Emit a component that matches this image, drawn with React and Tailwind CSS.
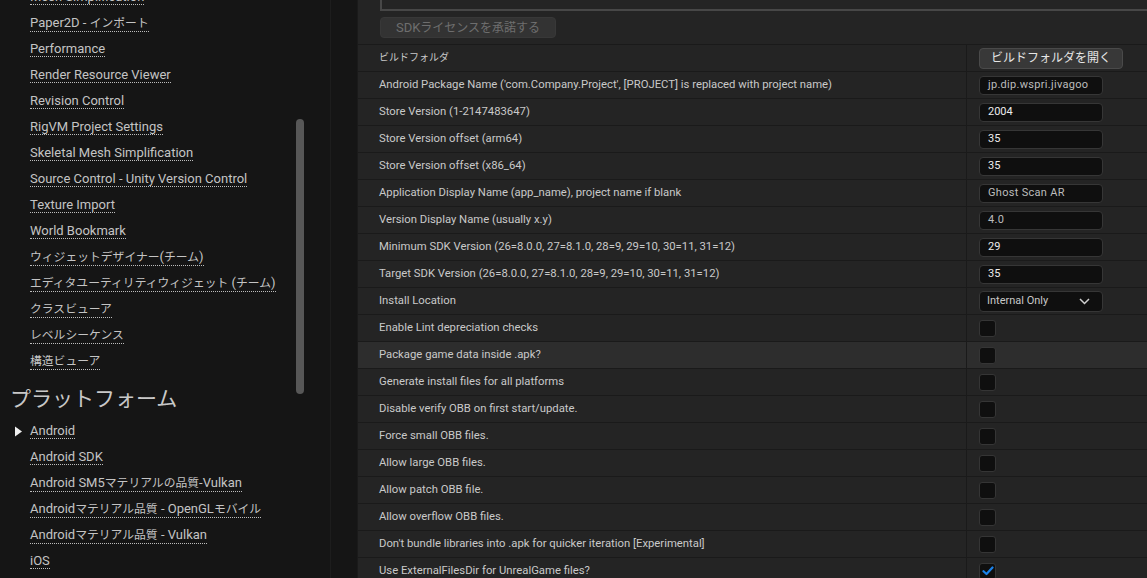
import React from "react";

const FONT = { fontFamily: "Roboto, 'Noto Sans CJK JP', sans-serif" };

const CJK_RE = /([\u3000-\u30ff\u4e00-\u9fff\uff00-\uffef]+)/;

function J({ text, cls }) {
  const parts = text.split(CJK_RE);
  return (
    <>
      {parts.map((p, i) =>
        p === "" ? null : CJK_RE.test(p) ? (
          <span key={i} className={cls}>
            {p}
          </span>
        ) : (
          <React.Fragment key={i}>{p}</React.Fragment>
        )
      )}
    </>
  );
}

const sideTop = [
  "Mesh Simplification",
  "Paper2D - インポート",
  "Performance",
  "Render Resource Viewer",
  "Revision Control",
  "RigVM Project Settings",
  "Skeletal Mesh Simplification",
  "Source Control - Unity Version Control",
  "Texture Import",
  "World Bookmark",
  "ウィジェットデザイナー(チーム)",
  "エディタユーティリティウィジェット (チーム)",
  "クラスビューア",
  "レベルシーケンス",
  "構造ビューア",
];

const sideBottom = [
  "Android",
  "Android SDK",
  "Android SM5マテリアルの品質-Vulkan",
  "Androidマテリアル品質 - OpenGLモバイル",
  "Androidマテリアル品質 - Vulkan",
  "iOS",
];

function SideItem({ text, arrow }) {
  return (
    <div className="relative flex h-[26px] shrink-0 items-center pl-[30px]">
      {arrow && (
        <svg className="absolute left-[14px] top-[8px]" width="9" height="11" viewBox="0 0 9 11">
          <path d="M1 0.5 L8 5.5 L1 10.5 Z" fill="#f0f0f0" />
        </svg>
      )}
      <span className="inline-block whitespace-nowrap border-b border-dotted border-[#bdbdbd] text-[13px] leading-[15px] text-[#c4c4c4]">
        <J text={text} cls="text-[11.8px]" />
      </span>
    </div>
  );
}

function Input({ value, bright }) {
  return (
    <div
      className={
        "flex h-[19px] w-[124px] items-center rounded-[4px] border border-[#363636] bg-[#0f0f0f] pl-[8px] text-[11px] " +
        (bright ? "text-[#ececec]" : "text-[#bdbdbd] tracking-[0.3px]")
      }
    >
      {value}
    </div>
  );
}

function Check({ checked }) {
  return (
    <div className="flex h-[17px] w-[17px] items-center justify-center rounded-[3px] border border-[#353535] bg-[#0f0f0f]">
      {checked && (
        <svg width="12" height="10" viewBox="0 0 12 10">
          <path d="M1.5 5.2 L4.5 8 L10.5 1.5" stroke="#1b82ea" strokeWidth="2.2" fill="none" strokeLinecap="round" strokeLinejoin="round" />
        </svg>
      )}
    </div>
  );
}

const rows = [
  { label: "ビルドフォルダ", kind: "button" },
  { label: "Android Package Name ('com.Company.Project', [PROJECT] is replaced with project name)", kind: "input", value: "jp.dip.wspri.jivagoo" },
  { label: "Store Version (1-2147483647)", kind: "input", value: "2004", bright: true },
  { label: "Store Version offset (arm64)", kind: "input", value: "35", bright: true },
  { label: "Store Version offset (x86_64)", kind: "input", value: "35", bright: true },
  { label: "Application Display Name (app_name), project name if blank", kind: "input", value: "Ghost Scan AR" },
  { label: "Version Display Name (usually x.y)", kind: "input", value: "4.0" },
  { label: "Minimum SDK Version (26=8.0.0, 27=8.1.0, 28=9, 29=10, 30=11, 31=12)", kind: "input", value: "29", bright: true },
  { label: "Target SDK Version (26=8.0.0, 27=8.1.0, 28=9, 29=10, 30=11, 31=12)", kind: "input", value: "35", bright: true },
  { label: "Install Location", kind: "select", value: "Internal Only" },
  { label: "Enable Lint depreciation checks", kind: "check" },
  { label: "Package game data inside .apk?", kind: "check", hover: true },
  { label: "Generate install files for all platforms", kind: "check" },
  { label: "Disable verify OBB on first start/update.", kind: "check" },
  { label: "Force small OBB files.", kind: "check" },
  { label: "Allow large OBB files.", kind: "check" },
  { label: "Allow patch OBB file.", kind: "check" },
  { label: "Allow overflow OBB files.", kind: "check" },
  { label: "Don't bundle libraries into .apk for quicker iteration [Experimental]", kind: "check" },
  { label: "Use ExternalFilesDir for UnrealGame files?", kind: "check", checked: true },
];

function Row({ r }) {
  let value = null;
  if (r.kind === "button") {
    value = (
      <div className="flex h-[21px] w-[144px] items-center justify-center rounded-[4px] border border-[#4a4a4a] bg-[#383838] text-[12px] text-[#e6e6e6]">
        ビルドフォルダを開く
      </div>
    );
  } else if (r.kind === "input") {
    value = <Input value={r.value} bright={r.bright} />;
  } else if (r.kind === "select") {
    value = (
      <div className="flex h-[21px] w-[124px] items-center justify-between rounded-[4px] border border-[#363636] bg-[#0f0f0f] pl-[7px] pr-[12px] text-[11px] text-[#c8c8c8]">
        <span>{r.value}</span>
        <svg width="11" height="7" viewBox="0 0 11 7">
          <path d="M1 1 L5.5 5.5 L10 1" stroke="#d0d0d0" strokeWidth="1.5" fill="none" />
        </svg>
      </div>
    );
  } else {
    value = <Check checked={r.checked} />;
  }
  return (
    <div className={"flex h-[27px] shrink-0 border-t border-[#1a1a1a] " + (r.hover ? "bg-[#2d2d2d]" : "")}>
      <div className="flex w-[609px] shrink-0 items-center border-r border-[#1a1a1a] pl-[21px] text-[11.3px] text-[#c9c9c9] whitespace-nowrap">
        <span>
          <J text={r.label} cls="text-[10px]" />
        </span>
      </div>
      <div className="flex flex-1 items-center pl-[12px]">{value}</div>
    </div>
  );
}

export default function App() {
  return (
    <div className="flex h-[578px] w-[1147px] overflow-hidden bg-[#151515]" style={FONT}>
      <div className="relative flex h-full w-[330px] shrink-0 flex-col overflow-hidden">
        <div className="mt-[-16px] flex flex-col">
          {sideTop.map((t) => (
            <SideItem key={t} text={t} />
          ))}
          <div className="flex h-[44px] shrink-0 items-center pl-[10px] pt-[6px] text-[21px] leading-none text-[#c8c8c8]">
            プラットフォーム
          </div>
          {sideBottom.map((t, i) => (
            <SideItem key={t} text={t} arrow={i === 0} />
          ))}
        </div>
        <div className="absolute left-[296px] top-[119px] h-[275px] w-[8px] rounded-full bg-[#575757]" />
      </div>
      <div className="h-full w-[1px] shrink-0 bg-[#1d1d1d]" />
      <div className="w-[26px] shrink-0" />
      <div className="flex h-full flex-1 flex-col overflow-hidden border-l border-[#1a1a1a] bg-[#242424]">
        <div className="ml-[22px] h-[11px] shrink-0 border-b-2 border-l-2 border-[#474747]" />
        <div className="flex h-[33px] shrink-0 items-center pl-[22px]">
          <div className="flex h-[21px] w-[176px] items-center justify-center rounded-[4px] border border-[#383838] bg-[#333333] text-[13px] text-[#6e6e6e]">
            <span>
              SDK<span className="text-[12px]">ライセンスを承諾する</span>
            </span>
          </div>
        </div>
        {rows.map((r) => (
          <Row key={r.label} r={r} />
        ))}
      </div>
    </div>
  );
}
